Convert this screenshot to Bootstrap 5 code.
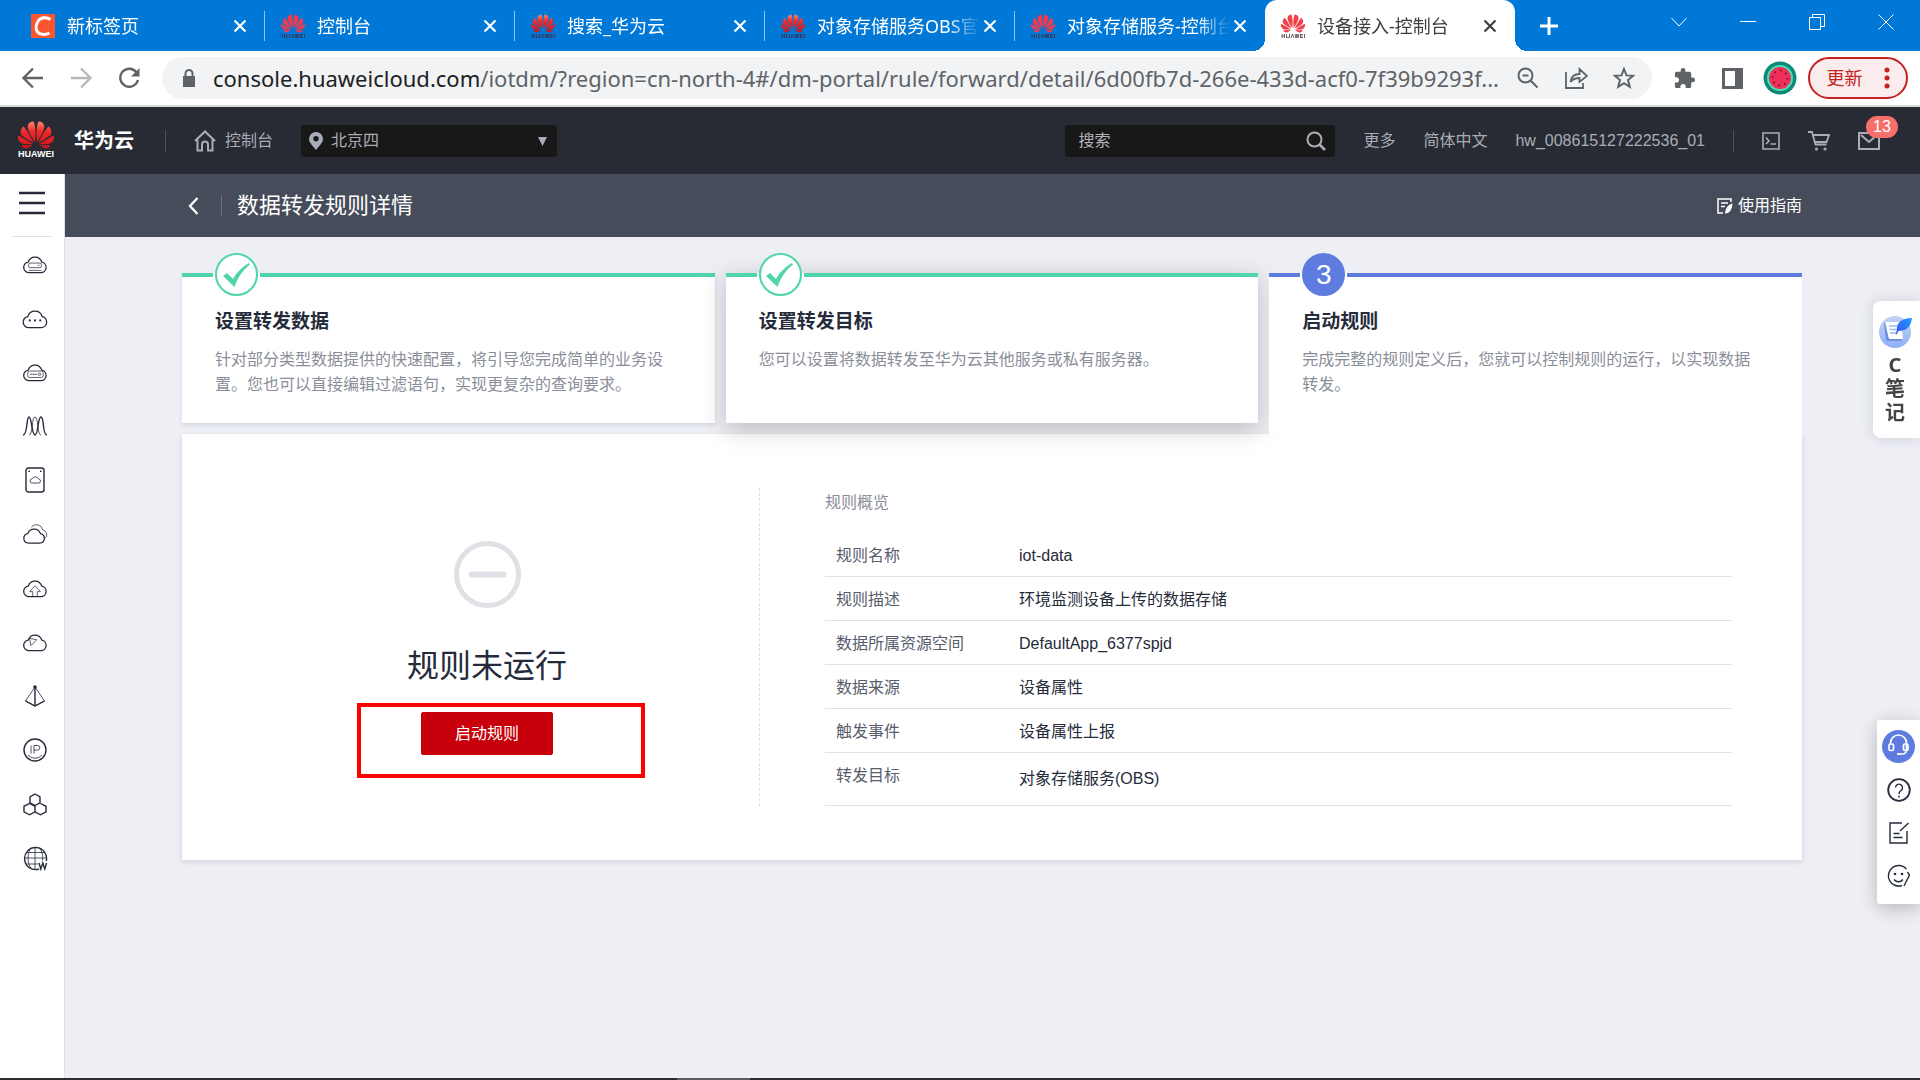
<!DOCTYPE html>
<html lang="zh-CN">
<head>
<meta charset="utf-8">
<meta name="viewport" content="width=device-width, initial-scale=1">
<title>设备接入-控制台</title>
<link href="https://cdn.jsdelivr.net/npm/bootstrap@5.3.0/dist/css/bootstrap.min.css" rel="stylesheet">
<style>
  :root { --ink: #252b3a; --line: #dfe1e6; --green: #50d4ab; --blue: #5e7ce0; --ui: "Liberation Sans", "Noto Sans CJK SC", sans-serif; --chrome: "Noto Sans", "Noto Sans CJK SC", sans-serif; }
  body { font-family: var(--ui); font-size: 16px; color: var(--ink); background: #eeeff5; }
  svg { display: block; flex: none; }
  .stroke { fill: none; stroke: currentColor; stroke-width: 2; }
  .plain { border: 0; background: none; padding: 0; color: inherit; display: flex; align-items: center; justify-content: center; flex: none; }
  a { color: inherit; text-decoration: none; }

  /* browser tabs */
  .tabstrip { height: 51px; background: #0078d7; color: #fff; padding-left: 15px; font-family: var(--chrome); font-size: 18px; }
  .tab-item { width: 250px; padding: 0 18px 0 16px; position: relative; }
  .tab-item:not(.is-active)::after { content: ""; position: absolute; right: 0; top: 11px; width: 1px; height: 30px; background: #8cc3ef; }
  .tab-item:nth-child(5)::after { display: none; }
  .tab-label { flex: 1 1 0; overflow: hidden; white-space: nowrap; line-height: 26px; margin-right: -6px; -webkit-mask-image: linear-gradient(90deg, #000 76%, transparent 95%); mask-image: linear-gradient(90deg, #000 76%, transparent 95%); }
  .tab-item.is-active { background: #fff; color: #3c4043; border-radius: 12px 12px 0 0; }
  .is-active::before, .is-active::after { content: ""; position: absolute; bottom: 0; width: 12px; height: 12px; }
  .is-active::before { left: -12px; background: radial-gradient(circle at 0 0, transparent 12px, #fff 12px); }
  .is-active::after { right: -12px; background: radial-gradient(circle at 100% 0, transparent 12px, #fff 12px); }
  .new-tab { width: 68px; }
  .win-btn { width: 69px; height: 43px; }
  .csdn { width: 24px; height: 24px; background: #fc5531; flex: none; }

  /* address bar */
  .toolbar-row { height: 56px; background: #fff; border-bottom: 2px solid #d9d9d9; color: #5f6368; padding: 0 12px 0 9px; font-family: var(--chrome); }
  .tool { width: 48px; height: 42px; }
  .omnibox { height: 42px; border-radius: 21px; background: #f1f3f4; margin-left: 9px; padding-left: 18px; padding-right: 4px; font-size: 22px; line-height: 30px; }
  .omnibox .host { color: #202124; margin-left: 15px; }
  .omnibox input { border: 0; outline: 0; background: none; padding: 0; color: #5f6368; flex: 1 1 0; min-width: 0; }
  .update-btn { width: 100px; height: 42px; border: 2px solid #c5221f; border-radius: 21px; background: #faecec; color: #c5221f; font-size: 18px; gap: 21px; }

  /* console navigation */
  .console-nav { height: 67px; background: #282b33; color: #a9adb8; padding-left: 18px; padding-right: 40px; }
  .brand-word { color: #fff; font-size: 9px; line-height: 11px; font-weight: 700; }
  .brand-name { color: #fff; font-size: 20px; font-weight: 700; margin-left: 20px; }
  .rule-v { width: 1px; height: 22px; background: #4d515d; flex: none; }
  .brand-rule { margin: 0 27px 0 31px; }
  .dark-field { height: 32px; background: #181818; border-radius: 3px; position: relative; }
  .dark-field select, .dark-field input { appearance: none; border: 0; outline: 0; background: none; color: #a9adb8; width: 100%; height: 100%; padding: 0; }
  .dark-field input::placeholder { color: #b0b3bb; opacity: 1; }
  .region-box { width: 256px; margin-left: 28px; padding: 0 10px 0 8px; gap: 8px; }
  .search-box { width: 270px; padding: 0 9px 0 13px; }
  .mail-count { position: absolute; left: 8px; top: -16px; height: 22px; width: 32px; border-radius: 11px; background: #f66f6a; color: #fff; font-size: 16px; line-height: 22px; text-align: center; }

  /* left rail */
  .rail { width: 65px; background: #fff; border-right: 1px solid var(--line); }
  .rail-head { height: 63px; width: 38px; margin-left: 13px; border-bottom: 1px solid var(--line); padding-right: 1px; }
  .rail a { height: 54px; padding-right: 8px; padding-left: 14px; display: flex; align-items: center; justify-content: center; }
  .thin { fill: none; stroke: currentColor; stroke-width: 1.4; }
  .hair { stroke-width: .8; }

  .page-head { height: 63px; background: #464c59; color: #fff; padding: 0 118px 0 123px; }
  .page-head .rule-v { background: #6a6f7c; margin-left: 22px; }
  .page-head h1 { font-size: 22px; line-height: 30px; font-weight: 400; margin: 0 0 0 15px; }
  .page-body { padding: 36px 118px 40px 117px; }

  /* steps */
  .steps { display: grid; grid-template-columns: repeat(3, 1fr); gap: 11px; }
  .step-card { position: relative; background: #fff; border-top: 4px solid var(--green); padding: 31px 40px 26px 33px; margin-bottom: 11px; box-shadow: 0 2px 4px rgba(40,50,70,.12); }
  .step-card::before { content: ""; position: absolute; left: 31px; top: -4px; width: 47px; height: 4px; background: #fff; }
  .step-card.is-raised { box-shadow: 0 6px 24px rgba(0,0,0,.22); z-index: 1; }
  .step-card.is-current { border-color: var(--blue); margin-bottom: 0; box-shadow: none; z-index: 2; }
  .step-card h2 { font-size: 19px; line-height: 28px; font-weight: 700; margin: 0 0 11px; }
  .step-card p { margin: 0; line-height: 25px; color: #8a8e99; }
  .step-dot { position: absolute; left: 33px; top: -24px; width: 43px; height: 43px; border-radius: 50%; border: 2px solid var(--green); background: #fff; color: var(--green); display: flex; align-items: center; justify-content: center; }
  .is-current .step-dot { background: var(--blue); border-color: var(--blue); color: #fff; font-size: 28px; line-height: 28px; }

  /* rule panel */
  .rule-panel { display: grid; grid-template-columns: 578fr 1042fr; background: #fff; padding: 54px 0; box-shadow: 0 2px 5px rgba(40,50,70,.14); }
  .state-col { padding: 53px 0 0 33px; border-right: 1px dashed var(--line); }
  .state-col h3 { font-size: 32px; line-height: 48px; font-weight: 400; margin: 34px 0 22px; }
  .start-btn { --bs-btn-bg: #c7000b; --bs-btn-border-color: #c7000b; --bs-btn-color: #fff; --bs-btn-hover-bg: #d64a52; --bs-btn-hover-color: #fff; --bs-btn-font-size: 16px; width: 132px; height: 43px; border-radius: 2px; }
  .outline-mark { position: absolute; left: -64px; top: -9px; width: 288px; height: 75px; border: 4px solid #f00; pointer-events: none; }
  .info-col { padding: 0 70px 0 65px; }
  .info-col h4 { font-size: 16px; line-height: 30px; font-weight: 400; color: #8a8e99; margin: 0 0 15px; }
  .info-table { margin: 0; --bs-table-bg: transparent; border-color: var(--line); line-height: 21px; }
  .info-table > tbody > tr > * { padding: 12px 11px 10px; vertical-align: top; font-weight: 400; }
  .info-table > tbody > tr > th { width: 172px; color: #575d6c; }
  .info-table > tbody > tr > td { color: var(--ink); padding-left: 22px; }
  .info-table > tbody > tr.is-target > td { padding: 15px 11px 16px 22px; }

  .note-widget { position: fixed; right: 0; top: 301px; width: 47px; height: 137px; background: #fff; border-radius: 8px 0 0 8px; box-shadow: 0 0 14px rgba(40,50,70,.16); padding: 14px 3px 0 0; font-family: var(--chrome); font-weight: 700; font-size: 20px; line-height: 24px; color: #444; z-index: 5; flex-direction: column; justify-content: flex-start; }
  .help-dock { position: fixed; right: 0; top: 720px; width: 43px; height: 184px; background: #fff; border-radius: 3px 0 0 3px; box-shadow: 0 4px 18px rgba(0,0,0,.24); padding-top: 5px; z-index: 5; }
  .help-dock button { height: 43px; width: 43px; }
  .taskbar { height: 2px; background: #2e2d30; padding-left: 677px; }
  .taskbar span { display: block; width: 73px; height: 2px; background: #5c5b5e; }
</style>
<script src="https://cdn.jsdelivr.net/npm/bootstrap@5.3.0/dist/js/bootstrap.bundle.min.js"></script>
</head>
<body class="d-flex flex-column min-vh-100">

<svg width="0" height="0" class="position-absolute">
  <defs>
    <linearGradient id="petal" x1="0" y1="0" x2="0" y2="1"><stop offset="0" stop-color="#ff8a70"/><stop offset=".35" stop-color="#f02b2b"/><stop offset="1" stop-color="#c8141b"/></linearGradient>
    <symbol id="flower" viewBox="0 2.9 24 18.2">
      <path d="M3.67 6.14S1.82 7.91 1.72 9.78v.35c.08 1.51 1.22 2.4 1.22 2.4 1.83 1.79 6.26 4.04 7.3 4.55 0 0 .06.03.1-.01l.02-.04v-.04C7.52 10.8 3.67 6.14 3.67 6.14zM9.65 18.6c-.02-.08-.1-.08-.1-.08l-7.38.26c.8 1.43 2.15 2.53 3.56 2.2.96-.25 3.16-1.78 3.88-2.3.06-.05.04-.09.04-.09zm.08-.78C6.49 15.63.21 12.28.21 12.28c-.15.46-.2.9-.21 1.3v.07c0 1.07.4 1.82.4 1.82.8 1.69 2.34 2.2 2.34 2.2.7.3 1.4.31 1.4.31.12.02 4.4 0 5.54 0 .05 0 .08-.05.08-.05v-.06c0-.03-.03-.05-.03-.05zM9.06 3.19a3.42 3.42 0 00-2.57 3.15v.41c.03.6.16 1.05.16 1.05.66 2.9 3.86 7.65 4.55 8.65.05.05.1.03.1.03a.1.1 0 00.06-.1c1.06-10.6-1.11-13.42-1.11-13.42-.32.02-1.19.23-1.19.23zm8.3 2.27s-.49-1.8-2.44-2.28c0 0-.57-.14-1.17-.22 0 0-2.18 2.81-1.12 13.43.01.07.06.08.06.08.07.03.1-.03.1-.03.72-1.03 3.9-5.76 4.55-8.64 0 0 .36-1.4.02-2.34zm-2.92 13.07s-.07 0-.09.05c0 0-.01.07.03.1.7.51 2.85 2 3.88 2.3 0 0 .16.05.43.06h.14c.69-.02 1.9-.37 3-2.26l-7.4-.25zm7.83-8.41c.14-2.06-1.94-3.97-1.94-3.98 0 0-3.85 4.66-6.67 10.8 0 0-.03.08.02.13l.04.01h.06c1.06-.53 5.46-2.77 7.28-4.54 0 0 1.15-.93 1.21-2.42zm1.52 2.14s-6.28 3.37-9.52 5.55c0 0-.05.04-.03.11 0 0 .03.06.07.06 1.16 0 5.56 0 5.67-.02 0 0 .57-.02 1.27-.29 0 0 1.56-.5 2.37-2.27 0 0 .73-1.45.17-3.14z"/>
    </symbol>
    <symbol id="fav" viewBox="0 0 24 24">
      <use href="#flower" x="0" y="0" width="24" height="19"/>
      <path fill="none" stroke="#4a2a3c" stroke-width="1" opacity=".75" d="M1 20v4M3.500 20v4M1 22h2.500M5.500 20v3.500h3V20M10 24l1.500-4 1.500 4M14 20l1 4 1-4 1 4 1-4M19.500 20v4M19.500 20.500h2.500M19.500 22h2M19.500 23.500h2.500M23.500 20v4"/>
    </symbol>
    <symbol id="x" viewBox="0 0 14 14"><path fill="none" stroke="currentColor" stroke-width="2.200" d="M1.500 1.500l11 11M12.500 1.500l-11 11"/></symbol>
    <symbol id="cloud" viewBox="0 0 28 22"><path fill="none" stroke="currentColor" stroke-width="1.400" d="M8 20.500h12.500a5.800 5.800 0 0 0 1-11.500 7.800 7.800 0 0 0-15 0A5.800 5.800 0 0 0 8 20.500z"/></symbol>
  </defs>
</svg>

<header>
  <div class="tabstrip d-flex">
    <div class="tab-item d-flex align-items-center"><span class="csdn d-flex align-items-center justify-content-center"><svg width="24" height="24" viewBox="0 0 24 24"><path class="stroke" style="stroke-width:3" d="M19.500 5.500C16 2.800 10 3 7.500 6.500c-2 3-3.500 8-1 11.500 2.500 3 8 3 12 1"/></svg></span><span class="tab-label ms-2 ps-1">新标签页</span><button class="plain" aria-label="关闭"><svg width="14" height="14"><use href="#x"/></svg></button></div>
    <div class="tab-item d-flex align-items-center"><svg width="24" height="24" fill="#ee3a4e"><use href="#fav"/></svg><span class="tab-label ms-2 ps-1">控制台</span><button class="plain" aria-label="关闭"><svg width="14" height="14"><use href="#x"/></svg></button></div>
    <div class="tab-item d-flex align-items-center"><svg width="24" height="24" fill="url(#petal)"><use href="#fav"/></svg><span class="tab-label ms-2 ps-1">搜索_华为云</span><button class="plain" aria-label="关闭"><svg width="14" height="14"><use href="#x"/></svg></button></div>
    <div class="tab-item d-flex align-items-center"><svg width="24" height="24" fill="url(#petal)"><use href="#fav"/></svg><span class="tab-label ms-2 ps-1">对象存储服务OBS官</span><button class="plain" aria-label="关闭"><svg width="14" height="14"><use href="#x"/></svg></button></div>
    <div class="tab-item d-flex align-items-center"><svg width="24" height="24" fill="#ee3a4e"><use href="#fav"/></svg><span class="tab-label ms-2 ps-1">对象存储服务-控制台</span><button class="plain" aria-label="关闭"><svg width="14" height="14"><use href="#x"/></svg></button></div>
    <div class="tab-item is-active d-flex align-items-center"><svg width="24" height="24" fill="#f2404b"><use href="#fav"/></svg><span class="tab-label ms-2 ps-1">设备接入-控制台</span><button class="plain" aria-label="关闭"><svg width="14" height="14"><use href="#x"/></svg></button></div>
    <button class="plain new-tab" aria-label="新标签页"><svg width="18" height="18"><path class="stroke" style="stroke-width:3" d="M9 0v18M0 9h18"/></svg></button>
    <div class="d-flex ms-auto">
      <button class="plain win-btn" aria-label="搜索标签页"><svg width="16" height="10"><path class="stroke" style="stroke-width:1" d="M.500 1L8 9l7.500-8"/></svg></button>
      <button class="plain win-btn" aria-label="最小化"><svg width="16" height="2"><path fill="#fff" d="M0 0h16v1H0z"/></svg></button>
      <button class="plain win-btn" aria-label="还原"><svg width="16" height="16"><path class="stroke" style="stroke-width:1" d="M.500 3.500h11v12H.500zM3.500 3V.500h12v12H12"/></svg></button>
      <button class="plain win-btn" aria-label="关闭窗口"><svg width="16" height="16"><path class="stroke" style="stroke-width:1" d="M.500.500l15 15M15.500.500l-15 15"/></svg></button>
    </div>
  </div>

  <div class="toolbar-row d-flex align-items-center">
    <button class="plain tool" aria-label="后退"><svg width="22" height="22"><path class="stroke" style="stroke-width:2.300" d="M21 11H2M11 1.500L1.500 11l9.500 9.500"/></svg></button>
    <button class="plain tool" aria-label="前进"><svg width="22" height="22" opacity=".45"><path class="stroke" style="stroke-width:2.300" d="M1 11h19M11 1.500l9.500 9.500-9.500 9.500"/></svg></button>
    <button class="plain tool" aria-label="刷新"><svg width="22" height="22"><path class="stroke" style="stroke-width:2.400" d="M18.600 5.500A9 9 0 1 0 20 13"/><path fill="currentColor" d="M21.500 1v8.500H13z"/></svg></button>
    <div class="omnibox d-flex align-items-center flex-fill">
      <svg width="18" height="18" viewBox="0 0 18 18"><path fill="currentColor" d="M3 7h12v11H3z"/><path class="stroke" d="M5.500 8V4.500a3.500 3.500 0 0 1 7 0V8"/></svg>
      <label class="host" for="url">console.huaweicloud.com</label><input id="url" value="/iotdm/?region=cn-north-4#/dm-portal/rule/forward/detail/6d00fb7d-266e-433d-acf0-7f39b9293f...">
      <button class="plain tool" aria-label="缩放"><svg width="22" height="22"><circle class="stroke" cx="8.500" cy="8.500" r="7"/><path class="stroke" d="M13.500 13.500l7 7M5.500 8.500h6"/></svg></button>
      <button class="plain tool" aria-label="分享"><svg width="23" height="22"><path class="stroke" style="stroke-width:1.800" d="M1 5v16h17v-5M5.500 15c.5-5 4-8 9-8V2l7.500 7-7.500 6v-4c-4 0-7 1-9 4z"/></svg></button>
      <button class="plain tool" aria-label="收藏"><svg width="22" height="22" viewBox="0 0 22 22"><path class="stroke" d="M11 2l2.500 6.400 6.700.4-5.200 4.300 1.800 6.700L11 16.100l-5.800 3.700L7 13.100 1.800 8.800l6.700-.4z"/></svg></button>
    </div>
    <button class="plain tool ms-2" aria-label="扩展"><svg width="23" height="23" viewBox="0 0 24 24" fill="currentColor"><path d="M20.500 11H19V7a2 2 0 0 0-2-2h-4V3.500a2.500 2.500 0 0 0-5 0V5H4a2 2 0 0 0-2 2v3.800h1.500a2.700 2.700 0 0 1 0 5.400H2V20a2 2 0 0 0 2 2h3.800v-1.500a2.700 2.700 0 0 1 5.400 0V22H17a2 2 0 0 0 2-2v-4h1.500a2.500 2.500 0 0 0 0-5z"/></svg></button>
    <button class="plain tool" aria-label="侧边栏"><svg width="21" height="21"><path fill="currentColor" fill-rule="evenodd" d="M0 0h21v21H0zM3 3v15h10V3z"/></svg></button>
    <button class="plain tool" aria-label="用户"><svg width="34" height="34" viewBox="0 0 34 34"><circle cx="17" cy="17" r="16.500" fill="#0b8a7a"/><circle cx="17" cy="17" r="13" fill="#4fdcae"/><circle cx="17" cy="17" r="11" fill="#f02d5b"/><circle cx="17" cy="17" r="7.500" fill="none" stroke="#4a1020" stroke-width="1.600" stroke-dasharray="1.500 4.390"/></svg></button>
    <button class="plain update-btn ms-1">更新<svg width="6" height="22" fill="currentColor"><circle cx="3" cy="3" r="2.500"/><circle cx="3" cy="11" r="2.500"/><circle cx="3" cy="19" r="2.500"/></svg></button>
  </div>
</header>

<nav class="console-nav d-flex align-items-center">
  <a href="#" class="d-flex flex-column align-items-center"><svg width="36" height="28" fill="url(#petal)"><use href="#flower"/></svg><span class="brand-word d-block">HUAWEI</span></a>
  <a href="#" class="brand-name">华为云</a>
  <span class="rule-v brand-rule"></span>
  <a href="#" class="d-flex align-items-center gap-2"><svg width="24" height="24"><path class="stroke" d="M2 12L12 2.500 22 12M4.500 10.500v11h4.500v-6a3 3 0 0 1 6 0v6h4.500v-11"/></svg>控制台</a>
  <div class="dark-field region-box d-flex align-items-center">
    <svg width="14" height="18" viewBox="0 0 14 18"><path fill="currentColor" fill-rule="evenodd" d="M7 0a7 7 0 0 1 7 7c0 4-4.500 7.500-7 11C4.500 14.500 0 11 0 7a7 7 0 0 1 7-7zm0 4a2.700 2.700 0 1 0 0 5.400A2.700 2.700 0 0 0 7 4z"/></svg>
    <select aria-label="区域"><option>北京四</option></select>
    <svg width="9" height="10" fill="currentColor"><path d="M0 1h9l-4.500 9z"/></svg>
  </div>
  <div class="dark-field search-box d-flex align-items-center ms-auto">
    <input type="text" placeholder="搜索" aria-label="搜索">
    <button class="plain" aria-label="搜索"><svg width="20" height="20"><circle class="stroke" cx="8.500" cy="8.500" r="7"/><path class="stroke" style="stroke-width:2.500" d="M13.500 13.500l5.500 5.500"/></svg></button>
  </div>
  <a href="#" class="ms-4 ps-1">更多</a>
  <a href="#" class="ms-4 ps-1">简体中文</a>
  <a href="#" class="ms-4 ps-1 pe-1">hw_008615127222536_01</a>
  <span class="rule-v ms-4 me-4"></span>
  <a href="#" class="ps-1 me-4" aria-label="CloudShell"><svg width="18" height="18"><path class="stroke" style="stroke-width:1.600" d="M1 1h16v16H1zM4 5.500L7 9l-3 3M8.500 12H14"/></svg></a>
  <a href="#" class="ps-1 me-4" aria-label="购物车"><svg width="22" height="20"><path class="stroke" style="stroke-width:1.800" d="M0 1h4l3.500 12.500h11M5 4h16l-2.500 7H7"/><circle cx="8.500" cy="18" r="1.600" fill="currentColor"/><circle cx="17" cy="18" r="1.600" fill="currentColor"/></svg></a>
  <a href="#" class="ps-1 position-relative" aria-label="消息"><svg width="22" height="18"><path class="stroke" d="M1 1h20v16H1zM3 3l8 7 8-7"/></svg><span class="mail-count ms-1">13</span></a>
</nav>

<div class="d-flex flex-fill">
  <aside class="rail flex-shrink-0">
    <div class="rail-head d-flex align-items-center justify-content-center"><button class="plain pb-1" aria-label="菜单"><svg width="26" height="24"><path class="stroke" style="stroke-width:2.400" d="M0 2h26M0 12h26M0 22h26"/></svg></button></div>
    <a href="#" aria-label="云服务器"><svg width="26" height="20" viewBox="0 0 28 22"><use href="#cloud"/><g class="thin hair"><rect x="7" y="10" width="14" height="5" rx="1.500"/><path d="M7 18h14M17 12.500h2"/></g></svg></a>
    <a href="#" aria-label="云"><svg width="28" height="21" viewBox="0 0 28 22"><use href="#cloud"/><g fill="currentColor"><circle cx="8.500" cy="13" r="1.100"/><circle cx="14" cy="13" r="1.100"/><circle cx="19.500" cy="13" r="1.100"/></g></svg></a>
    <a href="#" aria-label="裸金属"><svg width="26" height="20" viewBox="0 0 28 22"><use href="#cloud"/><g class="thin hair"><rect x="6" y="10" width="17" height="7" rx="2"/><path d="M8.500 13.500h8"/><circle cx="19" cy="13.500" r="1.300"/></g></svg></a>
    <a href="#" aria-label="弹性伸缩"><svg width="26" height="20" viewBox="0 0 26 20"><path class="thin" d="M1 19c5 0 3-18 6-18s2.500 18 6 18S15.500 1 19 1s1 18 6 18"/><path class="thin hair" d="M7 19c4 0 2.500-18 6-18s2 18 6 18"/></svg></a>
    <a href="#" aria-label="云硬盘"><svg width="20" height="26" viewBox="0 0 20 26"><rect class="thin" x="1" y="1" width="18" height="24" rx="2.500"/><path class="thin hair" d="M7 16h6.500a2 2 0 0 0 0-4 3.500 3.500 0 0 0-6.500 0 2 2 0 0 0 0 4z"/><path fill="currentColor" d="M3.500 3.500H5V5H3.500zM15 3.500h1.500V5H15z"/></svg></a>
    <a href="#" aria-label="专属云"><svg width="26" height="20" viewBox="0 0 28 22"><path class="thin" d="M7 21h12a5.300 5.300 0 0 0 1-10.500 7.500 7.500 0 0 0-14 0A5.300 5.300 0 0 0 7 21z"/><path class="thin hair" d="M10 3.500a7 7 0 0 1 12.500 3.200 5 5 0 0 1 2 9.300"/></svg></a>
    <a href="#" aria-label="云备份"><svg width="26" height="20" viewBox="0 0 28 22"><use href="#cloud"/><path class="thin hair" d="M11.500 20v-5h-3.500l6-6.500 6 6.500h-3.500v5"/></svg></a>
    <a href="#" aria-label="云迁移"><svg width="26" height="20" viewBox="0 0 28 22"><use href="#cloud"/><path class="thin hair" d="M8 7l8 1.500-6.500 6.500z"/></svg></a>
    <a href="#" aria-label="智能边缘"><svg width="22" height="22" viewBox="0 0 22 22"><path class="thin hair" d="M11 2L1.500 16 11 21l9.500-5z"/><path class="thin" d="M11 2v19M1.500 16L11 21l9.500-5"/><circle cx="11" cy="2" r="1.800" fill="currentColor"/></svg></a>
    <a href="#" aria-label="弹性公网"><svg width="24" height="24" viewBox="0 0 24 24"><circle class="thin" cx="12" cy="12" r="11"/><path class="thin hair" d="M5 17a9 9 0 0 0 14 0M8 7.500v8M11 15.500v-8h3.500a2.300 2.300 0 0 1 0 4.600H11"/></svg></a>
    <a href="#" aria-label="对象存储"><svg width="24" height="23" viewBox="0 0 24 23"><path class="thin" d="M12 1l5 2.800v6L12 12.500 7 9.800v-6zM6.500 10.500l5.500 2.800v5.500l-5.500 3-5.500-3v-5.500zM17.500 10.500l5.500 2.800v5.500l-5.500 3-5.500-3"/></svg></a>
    <a href="#" aria-label="域名"><svg width="25" height="25" viewBox="0 0 25 25"><path class="thin" d="M16 23A11 11 0 1 1 23.300 15"/><path class="thin hair" d="M12 1v22M1.500 12h22M3 6.500h18M3 18h12M8 1.500c-4 6-4 15 0 21M16.500 1.500c3 4.500 3.500 9 3 13"/><path class="thin" d="M16 17l1.800 6 2-6 2 6 1.800-6"/></svg></a>
  </aside>

  <main class="flex-fill">
    <div class="page-head d-flex align-items-center">
      <a href="#" aria-label="返回"><svg width="11" height="18"><path class="stroke" style="stroke-width:2.300" d="M9.500 1L2 9l7.500 8"/></svg></a>
      <span class="rule-v"></span>
      <h1>数据转发规则详情</h1>
      <a href="#" class="d-flex align-items-center ms-auto gap-1"><svg width="18" height="16" viewBox="0 0 18 16"><path class="stroke" style="stroke-width:1.500" d="M7 15H2V1h13v3M5 5h7M5 8.500h4"/><path fill="#fff" d="M16.500 5.500c-4.500 1-7 4.500-7.500 10 4 0 7-3 7.500-10z"/></svg>使用指南</a>
    </div>

    <div class="page-body">
      <div class="steps">
        <section class="step-card">
          <span class="step-dot"><svg width="28" height="24" viewBox="0 0 28 24"><path fill="currentColor" d="M0 13l4-3 6 6C14 9 19 4 26 0l1 1.500C20 7 15 14 11.500 24z"/></svg></span>
          <h2>设置转发数据</h2>
          <p>针对部分类型数据提供的快速配置，将引导您完成简单的业务设置。您也可以直接编辑过滤语句，实现更复杂的查询要求。</p>
        </section>
        <section class="step-card is-raised">
          <span class="step-dot"><svg width="28" height="24" viewBox="0 0 28 24"><path fill="currentColor" d="M0 13l4-3 6 6C14 9 19 4 26 0l1 1.500C20 7 15 14 11.500 24z"/></svg></span>
          <h2>设置转发目标</h2>
          <p>您可以设置将数据转发至华为云其他服务或私有服务器。</p>
        </section>
        <section class="step-card is-current">
          <span class="step-dot">3</span>
          <h2>启动规则</h2>
          <p>完成完整的规则定义后，您就可以控制规则的运行，以实现数据转发。</p>
        </section>
      </div>

      <section class="rule-panel">
        <div class="state-col d-flex flex-column align-items-center">
          <svg width="67" height="67" viewBox="0 0 67 67"><circle cx="33.500" cy="33.500" r="31" fill="none" stroke="#dfe1e6" stroke-width="5"/><path stroke="#dfe1e6" stroke-width="6" stroke-linecap="round" d="M17.500 33.500h32"/></svg>
          <h3>规则未运行</h3>
          <div class="position-relative">
            <button type="button" class="btn start-btn">启动规则</button>
            <div class="outline-mark"></div>
          </div>
        </div>
        <div class="info-col">
          <h4>规则概览</h4>
          <table class="table info-table">
            <tbody>
              <tr><th scope="row">规则名称</th><td>iot-data</td></tr>
              <tr><th scope="row">规则描述</th><td>环境监测设备上传的数据存储</td></tr>
              <tr><th scope="row">数据所属资源空间</th><td>DefaultApp_6377spjd</td></tr>
              <tr><th scope="row">数据来源</th><td>设备属性</td></tr>
              <tr><th scope="row">触发事件</th><td>设备属性上报</td></tr>
              <tr class="is-target"><th scope="row">转发目标</th><td>对象存储服务(OBS)</td></tr>
            </tbody>
          </table>
        </div>
      </section>
    </div>
  </main>
</div>

<div class="taskbar"><span></span></div>

<button class="plain note-widget">
  <svg width="34" height="34" viewBox="0 0 34 34"><defs><linearGradient id="disc" x1="0" y1="0" x2="0" y2="1"><stop offset="0" stop-color="#c3d3f8"/><stop offset="1" stop-color="#8fb0f5"/></linearGradient><linearGradient id="quill" x1="1" y1="0" x2="0" y2="1"><stop offset="0" stop-color="#1e9bff"/><stop offset="1" stop-color="#3a50f0"/></linearGradient></defs><circle cx="17" cy="17" r="16" fill="url(#disc)"/><path fill="#6f8fe0" d="M6 8l2 17 2 1h14l-1-3H11L8 7z"/><path fill="#fff" d="M7 7h16l2 17H11z"/><path stroke="#9db9f5" stroke-width="1.300" d="M11 11h8M11.500 14.500h8M12 18h6"/><path fill="url(#quill)" d="M34 3c-9 0-16 4-15 12l-1.500 4 1 .5 2-3.500C29 16 33 11 34 3z"/></svg>
  <span class="mt-1">C</span><span>笔</span><span>记</span>
</button>

<div class="help-dock d-flex flex-column">
  <button class="plain" aria-label="客服"><svg width="33" height="33" viewBox="0 0 33 33"><circle cx="16.500" cy="16.500" r="16.500" fill="#5e7ce0"/><g fill="none" stroke="#fff" stroke-width="1.700"><path d="M8.500 14v-1a8 8 0 0 1 16 0v7a4 4 0 0 1-4 4h-2"/><rect x="7" y="14" width="4.500" height="6.500" rx="1.500"/><rect x="21.500" y="14" width="4.500" height="6.500" rx="1.500"/><path d="M15 24h4"/></g></svg></button>
  <button class="plain" aria-label="帮助"><svg width="24" height="24" viewBox="0 0 24 24"><circle class="thin" style="stroke-width:1.800" cx="12" cy="12" r="10.800"/><path class="thin" d="M8.500 9.500a3.500 3.500 0 1 1 5.500 3c-1.500 1-2 1.500-2 3.500M12 17.500v2"/></svg></button>
  <button class="plain" aria-label="建议"><svg width="22" height="24" viewBox="0 0 22 24"><path class="thin" d="M14 2H2v20h17V10M12 10l8.500-8M5.500 12.500h6M5.500 16.500h9"/></svg></button>
  <button class="plain" aria-label="满意度"><svg width="24" height="24" viewBox="0 0 24 24"><path class="thin" d="M15 21.500A10.300 10.300 0 1 1 19.500 5M17 22l5.500-11-2-3M7 15.500c2.500 3 6.500 3 9 0"/><circle cx="8" cy="10" r="1.300" fill="currentColor"/><circle cx="15" cy="10" r="1.300" fill="currentColor"/></svg></button>
</div>
</body>
</html>
